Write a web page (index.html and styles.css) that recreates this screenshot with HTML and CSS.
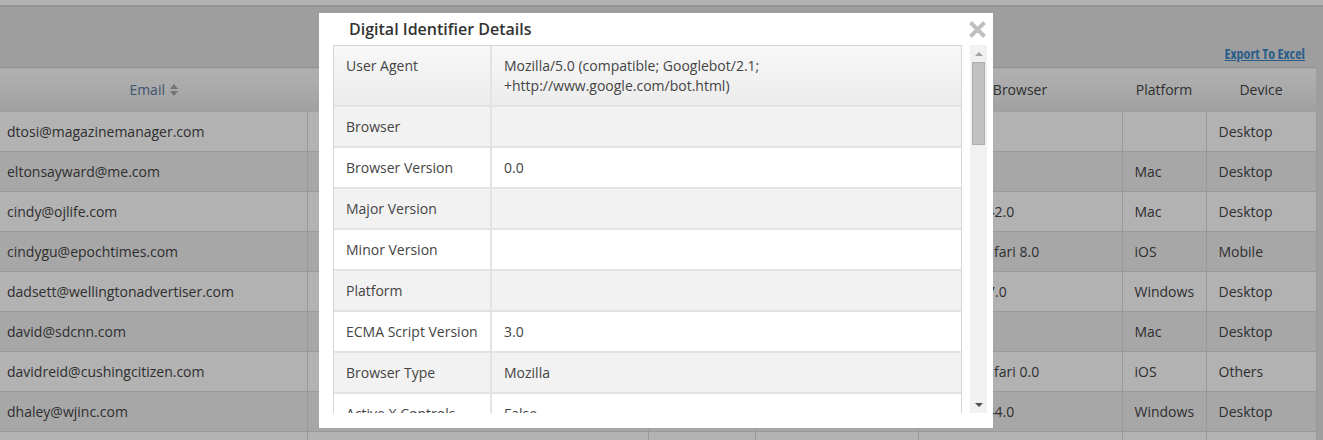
FILE: index.html
```html
<!DOCTYPE html>
<html lang="en">
<head>
  <meta charset="UTF-8" />
  <meta name="viewport" content="width=device-width, initial-scale=1.0"/>
  <title>Digital Identifier Details</title>
  <link rel="stylesheet" href="styles.css">
</head>
<body>

  <div class="topbar"></div>

  <div class="toolbar">
    <a href="#" class="export">Export To Excel</a>
  </div>

  <table class="report">
    <colgroup>
      <col style="width:307px">
      <col style="width:341px">
      <col style="width:107px">
      <col style="width:163px">
      <col style="width:204px">
      <col style="width:84px">
      <col style="width:110px">
    </colgroup>
    <thead>
      <tr>
        <th class="sortable">Email
          <svg class="sort" width="8" height="12" viewBox="0 0 8 12"><path d="M4 0 L8 5 L0 5 Z M0 7 L8 7 L4 12 Z"/></svg>
        </th>
        <th>Name</th>
        <th>Opens</th>
        <th>Date</th>
        <th>Browser</th>
        <th>Platform</th>
        <th>Device</th>
      </tr>
    </thead>
    <tbody>
      <tr><td class="email">dtosi@magazinemanager.com</td><td></td><td></td><td></td><td></td><td></td><td>Desktop</td></tr>
      <tr><td class="email">eltonsayward@me.com</td><td></td><td></td><td></td><td></td><td>Mac</td><td>Desktop</td></tr>
      <tr><td class="email">cindy@ojlife.com</td><td></td><td></td><td></td><td>Chrome 42.0</td><td>Mac</td><td>Desktop</td></tr>
      <tr><td class="email">cindygu@epochtimes.com</td><td></td><td></td><td></td><td>Mobile Safari 8.0</td><td>iOS</td><td>Mobile</td></tr>
      <tr><td class="email">dadsett@wellingtonadvertiser.com</td><td></td><td></td><td></td><td>Firefox 37.0</td><td>Windows</td><td>Desktop</td></tr>
      <tr><td class="email">david@sdcnn.com</td><td></td><td></td><td></td><td></td><td>Mac</td><td>Desktop</td></tr>
      <tr><td class="email">davidreid@cushingcitizen.com</td><td></td><td></td><td></td><td>Mobile Safari 0.0</td><td>iOS</td><td>Others</td></tr>
      <tr><td class="email">dhaley@wjinc.com</td><td></td><td></td><td></td><td>Chrome 44.0</td><td>Windows</td><td>Desktop</td></tr>
      <tr><td class="email"></td><td></td><td></td><td></td><td></td><td></td><td></td></tr>
    </tbody>
  </table>

  <div class="overlay"></div>

  <div class="modal">
    <div class="modal-head">
      <h3>Digital Identifier Details</h3>
      <span class="close">
        <svg width="19" height="19" viewBox="0 0 19 19"><path d="M2.5 2.5 L16.5 16.5 M16.5 2.5 L2.5 16.5"/></svg>
      </span>
    </div>
    <div class="modal-body">
      <div class="details">
        <table class="detail-table">
          <tr><td class="label">User Agent</td><td>Mozilla/5.0 (compatible; Googlebot/2.1; +http://www.google.com/bot.html)</td></tr>
          <tr><td class="label">Browser</td><td></td></tr>
          <tr><td class="label">Browser Version</td><td>0.0</td></tr>
          <tr><td class="label">Major Version</td><td></td></tr>
          <tr><td class="label">Minor Version</td><td></td></tr>
          <tr><td class="label">Platform</td><td></td></tr>
          <tr><td class="label">ECMA Script Version</td><td>3.0</td></tr>
          <tr><td class="label">Browser Type</td><td>Mozilla</td></tr>
          <tr><td class="label">Active X Controls</td><td>False</td></tr>
        </table>
      </div>
      <div class="scrollbar">
        <span class="arrow up"></span>
        <span class="thumb"></span>
        <span class="track"></span>
        <span class="arrow down"></span>
      </div>
    </div>
  </div>

</body>
</html>
```

FILE: styles.css
```css
* {
  margin: 0;
  padding: 0;
  box-sizing: border-box;
}

body {
  font-family: "Open Sans", Arial, sans-serif;
  font-size: 14px;
  color: #444;
  background: #e2e2e2;
  height: 440px;
  overflow: hidden;
}

/* Page behind the dialog */
.topbar {
  height: 7px;
  background: #fff;
  border-bottom: 2px solid #d4d4d4;
}

.toolbar {
  height: 60px;
  display: flex;
  justify-content: flex-end;
  align-items: flex-end;
  padding: 0 18px 4px 0;
}

.export {
  font-size: 14px;
  font-weight: 700;
  font-stretch: 75%;
  color: #3b87c8;
  text-decoration: underline;
}

.report {
  width: 1316px;
  table-layout: fixed;
  border-collapse: collapse;
}

.report th {
  height: 44px;
  font-weight: 400;
  color: #444;
  background: linear-gradient(#fdfdfd, #e6e6e6);
  border-top: 1px solid #d2d2d2;
}

.report th.sortable {
  color: #587a9f;
}

.sort {
  fill: #a8a8a8;
  vertical-align: -1px;
  margin-left: 1px;
}

.report td {
  height: 40px;
  padding: 0 12px;
  background: #fff;
  border-right: 1px solid #dcdcdc;
  border-bottom: 1px solid #dcdcdc;
  white-space: nowrap;
  overflow: hidden;
}

.report td.email {
  padding-left: 7px;
}

.report tbody tr:nth-child(even) td {
  background: #f0f0f0;
}

.overlay {
  position: fixed;
  inset: 0;
  background: rgba(0, 0, 0, 0.3);
}

/* Dialog */
.modal {
  position: absolute;
  left: 319px;
  top: 13px;
  width: 674px;
  height: 415px;
  background: #fff;
  padding: 0 6px 15px 14px;
  display: flex;
  flex-direction: column;
}

.modal-head {
  height: 32px;
  display: flex;
  align-items: center;
  justify-content: space-between;
  padding-left: 16px;
}

.modal-head h3 {
  font-size: 16px;
  font-weight: 600;
  color: #333;
}

.close {
  display: flex;
  cursor: pointer;
}

.close svg {
  stroke: #c0c0c0;
  stroke-width: 4;
}

.modal-body {
  flex: 1;
  min-height: 0;
  display: flex;
  gap: 8px;
}

.details {
  width: 629px;
  overflow: hidden;
}

.detail-table {
  width: 100%;
  border: 1px solid #d6d6d6;
  border-spacing: 0;
}

.detail-table td {
  padding: 10px 12px 9px;
  line-height: 20px;
  vertical-align: top;
  color: #444;
  border-bottom: 2px solid #e3e3e3;
}

.detail-table td.label {
  width: 158px;
  border-right: 2px solid #e3e3e3;
}

.detail-table tr:nth-child(even) td {
  background: #f2f2f2;
}

.detail-table tr:first-child td {
  background: linear-gradient(#f8f8f8, #ececec);
}

/* Fake scrollbar */
.scrollbar {
  width: 17px;
  background: #f1f1f1;
  display: flex;
  flex-direction: column;
  align-items: center;
}

.arrow {
  width: 100%;
  height: 17px;
  display: flex;
  align-items: center;
  justify-content: center;
}

.arrow::before {
  content: "";
  border-left: 4px solid transparent;
  border-right: 4px solid transparent;
}

.arrow.up::before {
  border-bottom: 4px solid #a3a3a3;
}

.arrow.down::before {
  border-top: 4px solid #505050;
}

.thumb {
  width: 13px;
  height: 83px;
  background: #c1c1c1;
  border: 1px solid #adadad;
}

.track {
  flex: 1;
}
```
